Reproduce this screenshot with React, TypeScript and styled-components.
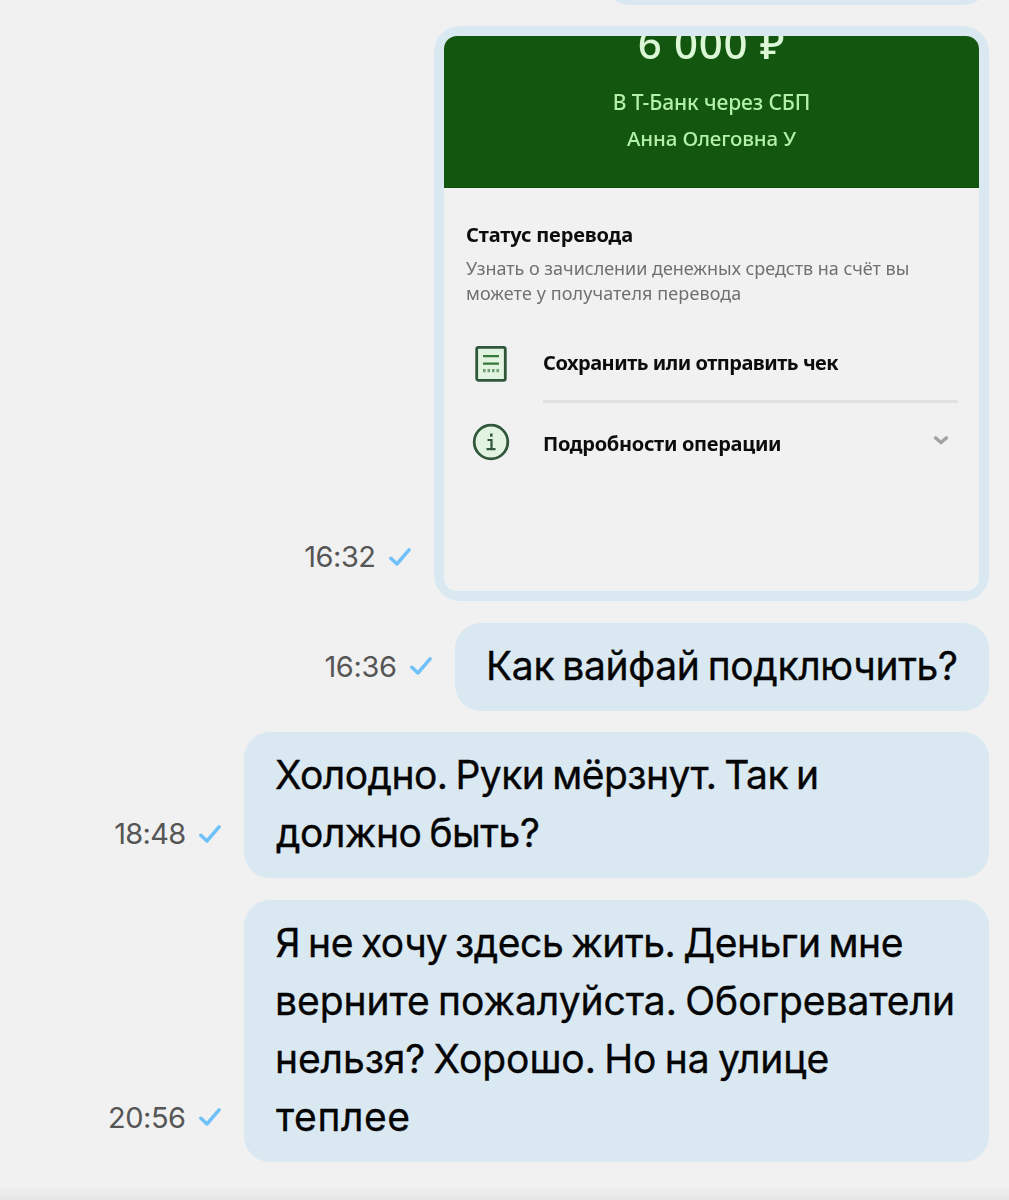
import React from "react";
import styled, { createGlobalStyle } from "styled-components";

const GlobalStyle = createGlobalStyle`
  * { box-sizing: border-box; }
  body { margin: 0; background: #f1f1f1; }
`;

const Page = styled.main`
  display: flex;
  flex-direction: column;
  gap: 21.4px;
  height: 1200px;
  overflow: hidden;
  background: #f1f1f1;
  font-family: Inter, "Liberation Sans", sans-serif;
`;

const MessageRow = styled.div`
  display: flex;
  flex: none;
  justify-content: flex-end;
  align-items: flex-end;
  gap: 23px;
  padding-right: 20px;
`;

const Meta = styled.div`
  display: flex;
  align-items: center;
  gap: 13.5px;
  margin-bottom: 26px;
`;

const Time = styled.time<{ $tracking: number }>`
  font-size: 29px;
  line-height: 36px;
  letter-spacing: ${(p) => p.$tracking}px;
  color: #565656;
`;

const Check = styled.svg`
  display: block;
  width: 22px;
  height: 19px;
  fill: none;
  stroke: #70c0fa;
  stroke-width: 3.5;
  stroke-linecap: round;
  stroke-linejoin: round;
`;

const Bubble = styled.div<{ $width: number }>`
  width: ${(p) => p.$width}px;
  padding: 14px 0 16px 31px;
  border-radius: 26px;
  background: #dae8f2;
`;

const EarlierBubble = styled.div`
  width: 385px;
  height: 60px;
  margin-top: -55.4px;
  border-radius: 26px;
  background: #dae8f2;
`;

const Line = styled.div<{ $tracking: number; $indent?: number }>`
  padding-left: ${(p) => p.$indent ?? 0}px;
  font-size: 39px;
  line-height: 58px;
  white-space: nowrap;
  word-spacing: -2.5px;
  letter-spacing: ${(p) => p.$tracking}px;
  color: #050505;
  -webkit-text-stroke: 0.35px #050505;
`;

const PhotoBubble = styled.div`
  width: 555px;
  height: 575.4px;
  padding: 10px;
  border-radius: 26px;
  background: #dae8f2;
`;

const Photo = styled.div`
  height: 100%;
  overflow: hidden;
  border-radius: 13px;
  background: #f1f1f1;
  font-family: "Noto Sans", "Open Sans", sans-serif;
`;

const PhotoHeader = styled.div`
  display: flex;
  flex-direction: column;
  align-items: center;
  height: 152px;
  overflow: hidden;
  background: #13560f;
  border-bottom: 1px solid #124a10;
`;

const Amount = styled.div`
  flex: none;
  margin-top: -15px;
  font-size: 42px;
  font-weight: 500;
  line-height: 44px;
  letter-spacing: 0.7px;
  color: #dcf7d6;
  filter: blur(0.7px);
`;

const HeaderLine = styled.div<{ $size: number; $top?: number; $tracking?: number }>`
  flex: none;
  margin-top: ${(p) => p.$top ?? 0}px;
  font-size: ${(p) => p.$size}px;
  font-weight: 500;
  line-height: 36px;
  letter-spacing: ${(p) => p.$tracking ?? 0}px;
  color: #b4f0a8;
  filter: blur(0.7px);
`;

const PhotoBody = styled.div`
  padding: 33px 21px 0 22px;
  filter: blur(0.7px);
`;

const StrongText = styled.div<{ $tracking: number }>`
  font-size: 20px;
  font-weight: 700;
  line-height: 28px;
  white-space: nowrap;
  letter-spacing: ${(p) => p.$tracking}px;
  color: #0c0c0c;
`;

const Note = styled.div`
  margin: 7px 0 20px;
  font-size: 18px;
  line-height: 25px;
  white-space: nowrap;
  color: #707070;
`;

const NoteLine = styled.div<{ $tracking?: number }>`
  letter-spacing: ${(p) => p.$tracking ?? 0}px;
`;

const Action = styled.div`
  display: flex;
  gap: 27px;
`;

const IconSlot = styled.div`
  display: flex;
  flex: none;
  align-items: center;
  justify-content: center;
  width: 50px;
`;

const ActionLabel = styled.div<{ $divided?: boolean }>`
  display: flex;
  flex: 1;
  align-items: center;
  justify-content: space-between;
  height: ${(p) => (p.$divided ? 77 : 82)}px;
  padding-right: 9px;
  border-bottom: ${(p) => (p.$divided ? "3px solid #e1e1e1" : "0")};
`;

const Icon = styled.svg`
  display: block;
  fill: none;
  stroke: #31573b;
`;

const BottomShade = styled.div`
  flex: none;
  height: 14px;
  margin-top: auto;
  background: linear-gradient(#f1f1f1, #e5e5e5);
`;

function Receipt() {
  return (
    <Icon width="40" height="42" viewBox="0 0 40 42">
      <rect x="5.7" y="3.4" width="28.6" height="33" rx="1.8" fill="#e3f3e2" strokeWidth="2.8" />
      <path d="M12 12.200h16M12 19.700h16" stroke="#347a3b" strokeWidth="2.3" />
      <path d="M12 26.700h16" stroke="#6f9f73" strokeWidth="3.2" strokeDasharray="2.6 1.9" />
    </Icon>
  );
}

function Info() {
  return (
    <Icon width="40" height="44" viewBox="0 0 40 44">
      <circle cx="20" cy="20" r="16.8" fill="#e3f3e2" strokeWidth="2.8" />
      <path d="M16.500 18h4v9M15.500 27.200h9" strokeWidth="2.2" />
      <path d="M20.300 11.500v3.200" strokeWidth="2.500" />
    </Icon>
  );
}

function Chevron() {
  return (
    <Icon width="16" height="20" viewBox="0 0 16 20">
      <path d="M1.500 3l6.500 5.500L14.500 3" stroke="#a2a2a2" strokeWidth="3.4" />
    </Icon>
  );
}

function Stamp({ time, tracking }: { time: string; tracking: number }) {
  return (
    <Meta>
      <Time $tracking={tracking}>{time}</Time>
      <Check viewBox="0 0 22 19">
        <path d="M1.900 10.300l6 5.700L20.100 1.900" />
      </Check>
    </Meta>
  );
}

type Message = {
  time: string;
  stampTracking: number;
  width: number;
  lines: { text: string; tracking: number; indent?: number }[];
};

const messages: Message[] = [
  {
    time: "16:36",
    stampTracking: -0.4,
    width: 534,
    lines: [{ text: "Как вайфай подключить?", tracking: -0.34 }],
  },
  {
    time: "18:48",
    stampTracking: -0.7,
    width: 745,
    lines: [
      { text: "Холодно. Руки мёрзнут. Так и", tracking: -0.54 },
      { text: "должно быть?", tracking: -0.48, indent: 1 },
    ],
  },
  {
    time: "20:56",
    stampTracking: -0.5,
    width: 745,
    lines: [
      { text: "Я не хочу здесь жить. Деньги мне", tracking: -0.48, indent: 0.5 },
      { text: "верните пожалуйста. Обогреватели", tracking: -0.05 },
      { text: "нельзя? Хорошо. Но на улице", tracking: -0.09 },
      { text: "теплее", tracking: 0.6, indent: 1 },
    ],
  },
];

export default function App() {
  return (
    <Page>
      <GlobalStyle />
      <MessageRow>
        <EarlierBubble />
      </MessageRow>
      <MessageRow>
        <Stamp time="16:32" tracking={-0.5} />
        <PhotoBubble>
          <Photo>
            <PhotoHeader>
              <Amount>6 000 ₽</Amount>
              <HeaderLine $size={21} $top={19} $tracking={-0.1}>В Т-Банк через СБП</HeaderLine>
              <HeaderLine $size={20.5} $tracking={-0.15}>Анна Олеговна У</HeaderLine>
            </PhotoHeader>
            <PhotoBody>
              <StrongText $tracking={-0.15}>Статус перевода</StrongText>
              <Note>
                <NoteLine $tracking={-0.03}>Узнать о зачислении денежных средств на счёт вы</NoteLine>
                <NoteLine $tracking={0.1}>можете у получателя перевода</NoteLine>
              </Note>
              <Action>
                <IconSlot>
                  <Receipt />
                </IconSlot>
                <ActionLabel $divided>
                  <StrongText $tracking={-0.5}>Сохранить или отправить чек</StrongText>
                </ActionLabel>
              </Action>
              <Action>
                <IconSlot>
                  <Info />
                </IconSlot>
                <ActionLabel>
                  <StrongText $tracking={-0.3}>Подробности операции</StrongText>
                  <Chevron />
                </ActionLabel>
              </Action>
            </PhotoBody>
          </Photo>
        </PhotoBubble>
      </MessageRow>
      {messages.map((m) => (
        <MessageRow key={m.time}>
          <Stamp time={m.time} tracking={m.stampTracking} />
          <Bubble $width={m.width}>
            {m.lines.map((l) => (
              <Line key={l.text} $tracking={l.tracking} $indent={l.indent}>
                {l.text}
              </Line>
            ))}
          </Bubble>
        </MessageRow>
      ))}
      <BottomShade />
    </Page>
  );
}
